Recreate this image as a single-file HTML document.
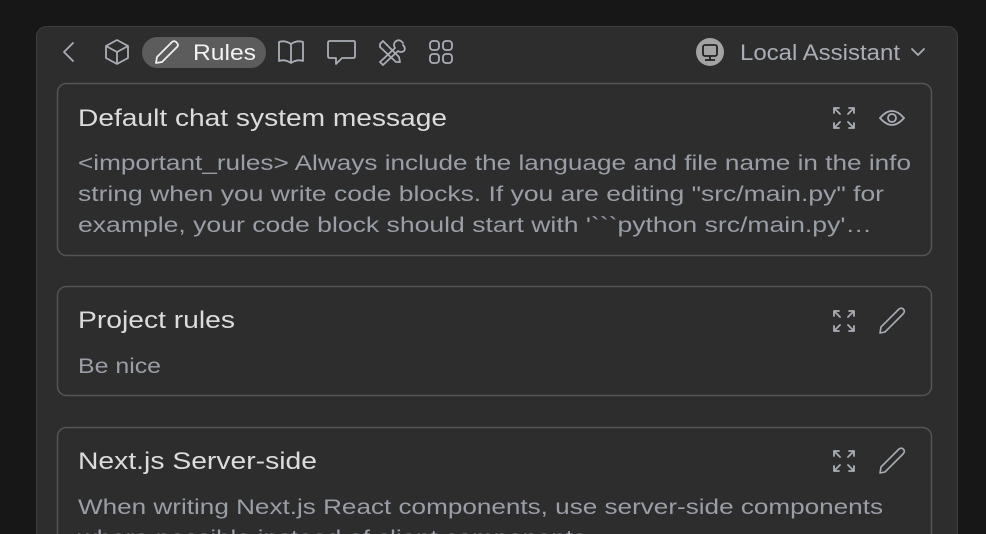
<!DOCTYPE html>
<html><head><meta charset="utf-8"><style>
html,body{margin:0;padding:0;background:#171717;width:986px;height:534px;overflow:hidden}
svg{display:block}
text{font-family:"Liberation Sans",sans-serif}
</style></head><body>
<svg width="986" height="534" viewBox="0 0 986 534" xmlns="http://www.w3.org/2000/svg">
<rect x="0" y="0" width="986" height="534" fill="#171717"/>
<rect x="36.5" y="26.5" width="921" height="520" rx="10" fill="#2d2d2d" stroke="#3e3e3e"/>
<!-- header -->
<g fill="none" stroke="#a9adb5" stroke-width="1.8" stroke-linecap="round" stroke-linejoin="round">
<path d="M73 43 L64 52 L73 61"/>
<path d="M117 40 L128 46 L128 58 L117 64 L106 58 L106 46 Z M106 46 L117 52 L128 46 M117 52 L117 64"/>
<path d="M279 42 Q285 40 291 44 Q297 40 303 42 L303 61 Q297 59 291 63 Q285 59 279 61 Z M291 44 L291 63"/>
<path d="M330 41 H354 Q355 41 355 43 V56 Q355 58 353 58 H342 L336 64 V58 H330 Q328 58 328 56 V43 Q328 41 330 41 Z"/>
<path d="M380 44 L383 41 L399 57 L400 62 L396 62 L380 47 Z M403 43 Q399 38 395 42 Q393 45 395 48 L380 62 L383 65 L398 51 Q401 53 404 51 Q406 48 403 45"/>
<rect x="430" y="41" width="9" height="9" rx="3"/><rect x="443" y="41" width="9" height="9" rx="3"/>
<rect x="430" y="54" width="9" height="9" rx="3"/><rect x="443" y="54" width="9" height="9" rx="3"/>
<path d="M912 49 L918 55 L924 49"/>
</g>
<rect x="142" y="37" width="124" height="31" rx="15.5" fill="#5c5c5c"/>
<path d="M156 63 L157 57 L172 42 Q175 40 177 43 Q179 45 177 47 L162 62 Z" fill="none" stroke="#eeeeee" stroke-width="1.8" stroke-linejoin="round"/>
<text x="193" y="60" font-size="22" fill="#f2f2f2" textLength="63" lengthAdjust="spacingAndGlyphs">Rules</text>
<circle cx="710" cy="52" r="14" fill="#a3a3a3"/>
<rect x="703" y="45" width="14" height="11" rx="2" fill="none" stroke="#222" stroke-width="1.8"/>
<path d="M710 56 V60 M705 60 H715" stroke="#222" stroke-width="1.8"/>
<text x="740" y="60" font-size="22" fill="#a9adb5" textLength="160" lengthAdjust="spacingAndGlyphs">Local Assistant</text>
<!-- cards -->
<g fill="#2d2d2d" stroke="#555555" stroke-width="1.5">
<rect x="57.5" y="83.5" width="874" height="172" rx="9"/>
<rect x="57.5" y="286.5" width="874" height="109" rx="9"/>
<rect x="57.5" y="427.5" width="874" height="120" rx="9"/>
</g>
<g font-size="24" fill="#dcdcdc">
<text x="78" y="126" textLength="369" lengthAdjust="spacingAndGlyphs">Default chat system message</text>
<text x="78" y="328" textLength="157" lengthAdjust="spacingAndGlyphs">Project rules</text>
<text x="78" y="469" textLength="239" lengthAdjust="spacingAndGlyphs">Next.js Server-side</text>
</g>
<g font-size="21" fill="#9a9ea7">
<text x="78" y="170" textLength="833" lengthAdjust="spacingAndGlyphs">&lt;important_rules&gt; Always include the language and file name in the info</text>
<text x="78" y="201" textLength="806" lengthAdjust="spacingAndGlyphs">string when you write code blocks. If you are editing "src/main.py" for</text>
<text x="78" y="232" textLength="794" lengthAdjust="spacingAndGlyphs">example, your code block should start with '&#96;&#96;&#96;python src/main.py'&#8230;</text>
<text x="78" y="373" textLength="83" lengthAdjust="spacingAndGlyphs">Be nice</text>
<text x="78" y="514" textLength="805" lengthAdjust="spacingAndGlyphs">When writing Next.js React components, use server-side components</text>
<text x="78" y="545" textLength="515" lengthAdjust="spacingAndGlyphs">where possible instead of client components.</text>
</g>
<!-- card icons -->
<defs>
<g id="exp" fill="none" stroke="#a9adb5" stroke-width="1.8" stroke-linecap="round">
<path d="M-10 -10 L-4 -4 M-10 -10 V-5 M-10 -10 H-5"/>
<path d="M10 -10 L4 -4 M10 -10 V-5 M10 -10 H5"/>
<path d="M-10 10 L-4 4 M-10 10 V5 M-10 10 H-5"/>
<path d="M10 10 L4 4 M10 10 V5 M10 10 H5"/>
</g>
<g id="pen" fill="none" stroke="#a9adb5" stroke-width="1.6" stroke-linejoin="round">
<path d="M-12 12 L-11 6 L7 -12 Q10 -14 12 -11 Q13 -9 11 -7 L-7 11 Z"/>
</g>
</defs>
<use href="#exp" x="844" y="118"/>
<g fill="none" stroke="#a9adb5" stroke-width="1.8">
<path d="M880 118 Q892 104 904 118 Q892 132 880 118 Z"/><circle cx="892" cy="118" r="4"/>
</g>
<use href="#exp" x="844" y="321"/>
<use href="#pen" x="892" y="321"/>
<use href="#exp" x="844" y="461"/>
<use href="#pen" x="892" y="461"/>
</svg>
</body></html>
